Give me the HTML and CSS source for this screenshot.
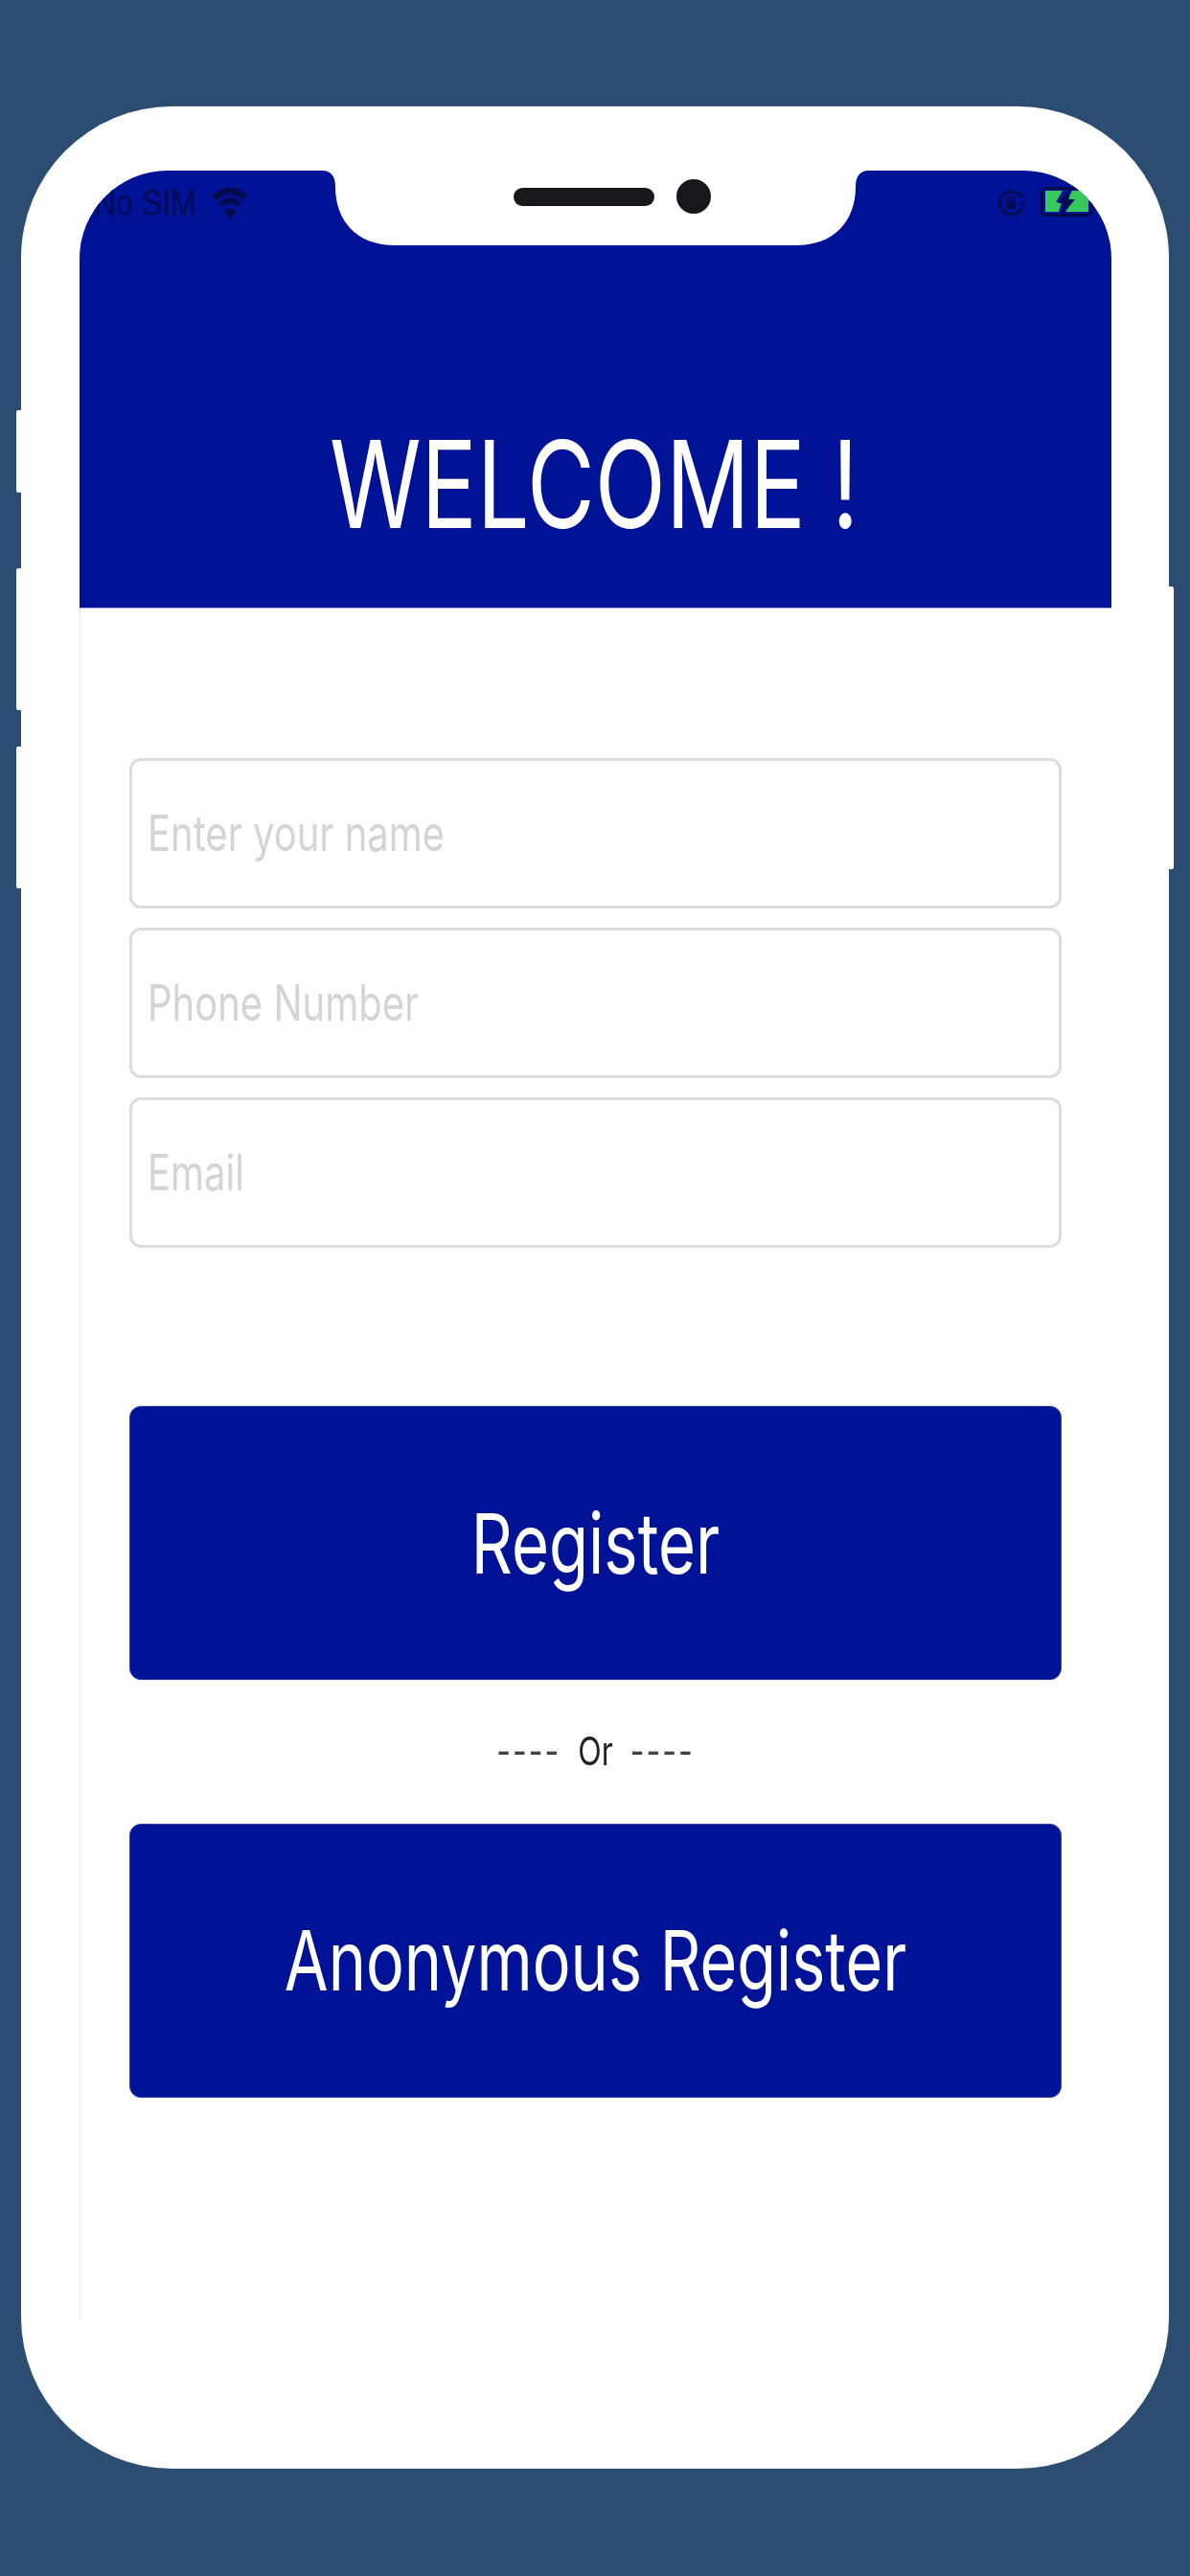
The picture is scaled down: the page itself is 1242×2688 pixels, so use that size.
FILE: index.html
```html
<!DOCTYPE html>
<html lang="en">
<head>
    <meta charset="UTF-8">
    <meta name="viewport" content="width=device-width, initial-scale=1.0">
    <title>Register</title>
    <link rel="stylesheet" href="styles.css">
</head>
<body>
    <div class="phone">
        <!-- side buttons -->
        <span class="side-btn side-mute"></span>
        <span class="side-btn side-up"></span>
        <span class="side-btn side-down"></span>
        <span class="side-btn side-power"></span>

        <div class="screen">
            <div class="header">
                <div class="status-bar">
                    <div class="status-group">
                        <span class="carrier">No SIM</span>
                        <svg class="wifi-icon" width="40" height="34" viewBox="0 0 39 34">
                            <path d="M3 11.500Q19.500 -3.500 36 11.500" fill="none" stroke="#020a50" stroke-width="6.500"/>
                            <path d="M9.500 19Q19.500 9 29.500 19" fill="none" stroke="#020a50" stroke-width="6"/>
                            <path d="M12.500 25Q19.500 20 26.500 25L19.500 33.500Z" fill="#020a50"/>
                        </svg>
                    </div>
                    <div class="status-group">
                        <svg class="lock-icon" width="29" height="32" viewBox="0 0 29 32">
                            <path d="M24.500 20.500A12 12 0 1 1 24.500 11" fill="none" stroke="#020a50" stroke-width="3"/>
                            <path d="M22 14H29L25 19Z" fill="#020a50"/>
                            <rect x="8.500" y="14" width="9.500" height="8" rx="1" fill="#020a50"/>
                            <path d="M10.500 14V11.500A2.800 2.800 0 0 1 16 11.500V14" fill="none" stroke="#020a50" stroke-width="1.800"/>
                        </svg>
                        <svg class="battery-icon" width="56" height="36" viewBox="0 0 56 36">
                            <rect x="1.500" y="2.500" width="52" height="28" rx="5" fill="none" stroke="#020a50" stroke-width="3"/>
                            <path d="M5 5H23L16 17H22L19 27H5Z" fill="#35c85c"/>
                            <path d="M33 5H47L50 15V27H26L33 17H27Z" fill="#35c85c"/>
                            <path d="M31 3L18 18H24.500L21 32L36 14H29.500Z" fill="#020a50"/>
                        </svg>
                    </div>
                </div>
                <h1 class="title"><span class="stretch">WELCOME !</span></h1>
            </div>

            <div class="content">
                <div class="field"><span class="stretch">Enter your name</span></div>
                <div class="field"><span class="stretch">Phone Number</span></div>
                <div class="field"><span class="stretch">Email</span></div>

                <button class="btn btn-register"><span class="stretch">Register</span></button>
                <p class="divider"><span class="stretch"><i>----</i>  <b>Or</b>  <i>----</i></span></p>
                <button class="btn btn-anon"><span class="stretch">Anonymous Register</span></button>
            </div>
        </div>

        <!-- notch sits over the blue header -->
        <svg class="notch" width="571" height="78" viewBox="0 0 571 78">
            <path d="M0 0Q14 0 14 17C14 52 36 78 76 78H495C535 78 557 52 557 17Q557 0 571 0Z" fill="#fff"/>
        </svg>
        <span class="speaker"></span>
        <span class="camera"></span>
    </div>
</body>
</html>
```

FILE: styles.css
```css
body {
    margin: 0;
    height: 2688px;
    overflow: hidden;
    background-color: #2c4c72;
    font-family: Inter, "Liberation Sans", sans-serif;
}
.phone {
    position: relative;
    box-sizing: border-box;
    width: 1198px;
    height: 2465px;
    margin: 111px 0 0 22px;
    padding: 67px 60px 0 61px;
    background-color: #fff;
    border-radius: 158px;
}
/* ---------------------------hardware------------------------------ */
.side-btn {
    position: absolute;
    width: 8px;
    background-color: #fff;
    border-radius: 2px;
}
.side-mute {
    left: -5px;
    top: 317px;
    height: 86px;
}
.side-up {
    left: -5px;
    top: 482px;
    height: 148px;
}
.side-down {
    left: -5px;
    top: 668px;
    height: 148px;
}
.side-power {
    right: -5px;
    top: 501px;
    height: 295px;
}
.notch {
    position: absolute;
    left: 314px;
    top: 67px;
}
.speaker {
    position: absolute;
    left: 514px;
    top: 85px;
    width: 147px;
    height: 19px;
    background-color: #17171c;
    border-radius: 10px;
}
.camera {
    position: absolute;
    left: 684px;
    top: 76px;
    width: 36px;
    height: 36px;
    background-color: #17171c;
    border-radius: 50%;
}
/* ---------------------------header------------------------------ */
.screen {
    width: 1077px;
}
.header {
    box-sizing: border-box;
    height: 457px;
    padding: 14px 18px 0 15px;
    overflow: hidden;
    background-color: #001296;
    border-bottom: 1px solid #aab4e6;
    border-radius: 92px 92px 0 0;
}
.status-bar {
    display: flex;
    justify-content: space-between;
    align-items: center;
    height: 40px;
}
.status-group {
    display: flex;
    align-items: center;
    gap: 15px;
}
.carrier {
    display: inline-block;
    font-family: "Liberation Sans", sans-serif;
    font-size: 32px;
    color: #020a50;
    transform: scaleY(1.2);
    filter: blur(0.6px);
}
.wifi-icon,
.lock-icon,
.battery-icon {
    filter: blur(0.5px);
}
.title {
    margin: 0;
    padding-top: 217px;
    padding-right: 0;
    font-size: 97px;
    line-height: 114px;
    font-weight: 400;
    text-align: center;
    color: #fff;
}
.stretch {
    display: inline-block;
    transform: scaleY(1.3);
    filter: blur(0.6px);
}
/* ---------------------------form------------------------------ */
.content {
    box-sizing: border-box;
    height: 1786px;
    padding: 156px 52px 0 51px;
    border-left: 1px solid #e4e4e4;
}
.field {
    box-sizing: border-box;
    display: flex;
    align-items: center;
    height: 157px;
    margin-bottom: 20px;
    padding-left: 16px;
    font-size: 40px;
    color: #d4d4d4;
    border: 3px solid #dcdcdc;
    border-radius: 12px;
}
.btn {
    display: block;
    width: 100%;
    height: 286px;
    padding: 0;
    font-family: inherit;
    font-size: 67px;
    color: #fff;
    background-color: #001296;
    border: 1px solid #3342ad;
    border-radius: 12px;
}
.btn-register {
    margin-top: 165px;
}
.btn-anon {
    font-size: 66.500px;
}
.divider {
    height: 150px;
    margin: 0;
    font-size: 32px;
    line-height: 150px;
    text-align: center;
    white-space: pre;
    color: #444;
}
.divider i {
    font-style: normal;
    letter-spacing: 2px;
}
.divider b {
    font-weight: 400;
    color: #222;
}
```
